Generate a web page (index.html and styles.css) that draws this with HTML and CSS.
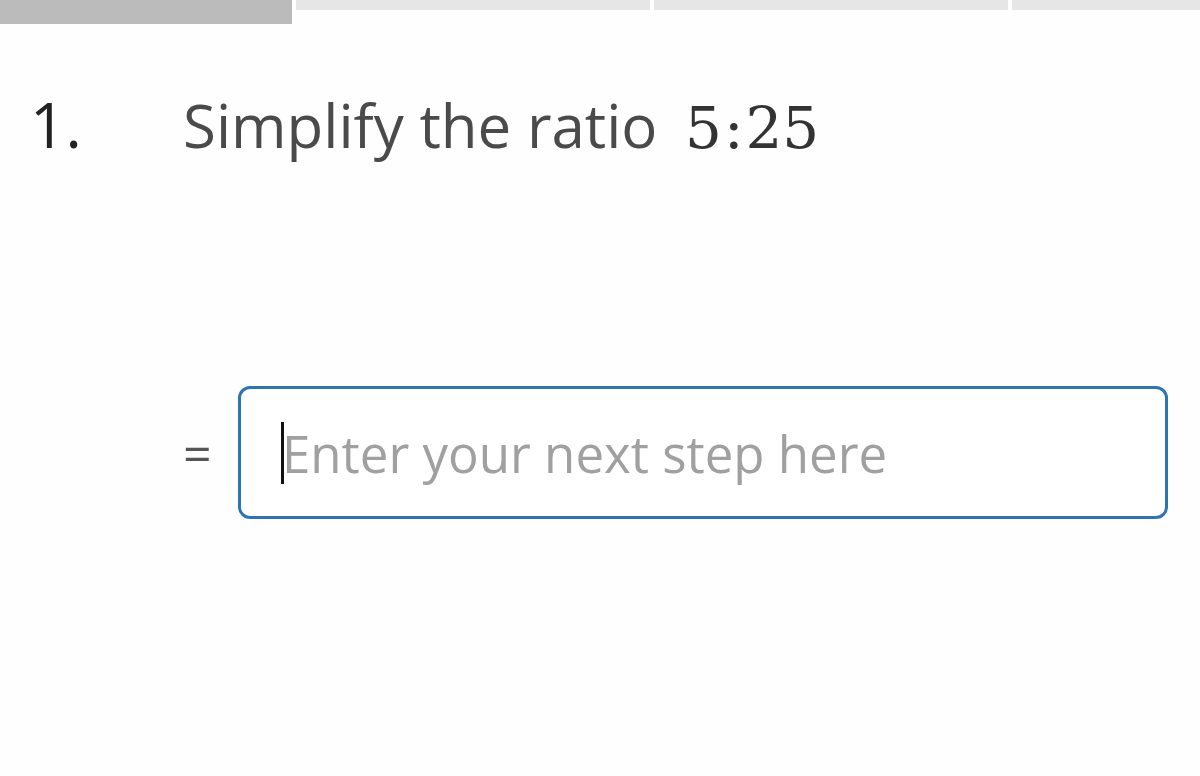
FILE: index.html
```html
<!DOCTYPE html>
<html>
<head>
<meta charset="utf-8">
<link rel="stylesheet" href="styles.css">
</head>
<body>
<div class="progress">
  <div class="seg seg-done"></div>
  <div class="seg"></div>
  <div class="seg"></div>
  <div class="seg seg-last"></div>
</div>
<div class="question">
  <div class="qnum">1.</div>
  <div class="qtext">Simplify the ratio <span class="math">5<span class="colon">:</span>25</span></div>
</div>
<div class="answer">
  <div class="eq">=</div>
  <div class="inputbox">
    <span class="caret"></span><span class="placeholder">Enter your next step here</span>
  </div>
</div>
</body>
</html>
```
FILE: styles.css
```css
html, body {
  margin: 0;
  padding: 0;
  background: #fefefe;
  width: 1200px;
  height: 776px;
  overflow: hidden;
  font-family: "Open Sans", Lato, sans-serif;
  font-variant-ligatures: none;
}
.progress {
  display: flex;
  gap: 4px;
  align-items: flex-start;
  height: 24px;
}
.seg {
  flex: 0 0 354px;
  height: 10px;
  background: #e6e6e6;
}
.seg-done {
  flex: 0 0 292px;
  height: 24px;
  background: #bbbbbb;
}
.seg-last {
  flex: 1 1 auto;
}
.question {
  display: flex;
  align-items: baseline;
  padding: 60px 0 0 30px;
  color: #444;
}
.qnum {
  width: 153px;
  font-size: 62px;
  color: #222;
  line-height: 80px;
}
.qtext {
  font-size: 60px;
  line-height: 80px;
  color: #4a4a4a;
}
.math {
  font-family: "DejaVu Serif", "Liberation Serif", "Times New Roman", serif;
  font-size: 58px;
  color: #333;
  margin-left: 12px;
}
.colon {
  margin: 0 2px;
}
.answer {
  display: flex;
  align-items: center;
  padding: 218px 0 0 183px;
}
.eq {
  width: 55px;
  font-size: 50px;
  color: #555;
}
.inputbox {
  box-sizing: border-box;
  width: 930px;
  height: 133px;
  border: 3px solid #2e74b3;
  border-radius: 12px;
  background: #fff;
  display: flex;
  align-items: center;
  padding-left: 40px;
}
.caret {
  display: inline-block;
  width: 3px;
  height: 62px;
  background: #111;
  margin-right: -2px;
}
.placeholder {
  font-size: 51px;
  color: #a0a0a0;
}
```
